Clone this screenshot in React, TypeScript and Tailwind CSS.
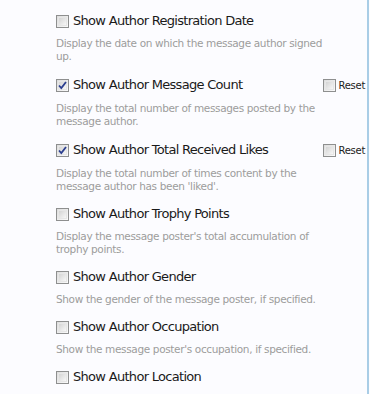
import React from 'react';

type Option = {
  label: string;
  description?: string;
  checked?: boolean;
  reset?: boolean;
};

const options: Option[] = [
  {
    label: 'Show Author Registration Date',
    description: 'Display the date on which the message author signed up.',
  },
  {
    label: 'Show Author Message Count',
    description: 'Display the total number of messages posted by the message author.',
    checked: true,
    reset: true,
  },
  {
    label: 'Show Author Total Received Likes',
    description: "Display the total number of times content by the message author has been 'liked'.",
    checked: true,
    reset: true,
  },
  {
    label: 'Show Author Trophy Points',
    description: "Display the message poster's total accumulation of trophy points.",
  },
  {
    label: 'Show Author Gender',
    description: 'Show the gender of the message poster, if specified.',
  },
  {
    label: 'Show Author Occupation',
    description: "Show the message poster's occupation, if specified.",
  },
  { label: 'Show Author Location' },
];

function Box({ checked }: { checked?: boolean }) {
  return (
    <span className="relative inline-block w-[13px] h-[13px] shrink-0 border border-[#8e8f8f] bg-gradient-to-br from-[#dcdcdc] to-[#fbfbfb]">
      <span className="absolute inset-[1px] border border-[#e6e6e6] bg-gradient-to-br from-[#d4d4d4] to-[#f7f7f7]" />
      {checked && (
        <svg className="absolute inset-0" width="11" height="11" viewBox="0 0 11 11">
          <path d="M2 5.5 L4.3 8 L9 2" fill="none" stroke="#2b3e8f" strokeWidth="1.8" />
        </svg>
      )}
    </span>
  );
}

export default function App() {
  return (
    <div className="w-[370px] h-[394px] overflow-hidden bg-[#fcfcff] flex font-['DejaVu_Sans',sans-serif]">
      <div className="flex-1 pl-[56px] pt-[14px]">
        {options.map((o) => (
          <div key={o.label} className="mb-[14px]">
            <div className="flex items-center">
              <label className="flex items-center gap-[4px] text-[13px] leading-[14px] text-[#1a1a1a] tracking-[-0.7px] flex-1">
                <Box checked={o.checked} />
                <span>{o.label}</span>
              </label>
              {o.reset && (
                <span className="flex items-center gap-[3px] mr-[2px] mt-[1px] text-[10px] text-[#222] tracking-[-0.3px]">
                  <Box />
                  Reset
                </span>
              )}
            </div>
            {o.description && (
              <p className="mt-[9px] w-[268px] text-[10.5px] leading-[13px] text-[#9c9c9c] tracking-[-0.35px]">
                {o.description}
              </p>
            )}
          </div>
        ))}
      </div>
      <div className="w-[2px] h-full bg-[#a9cde6] mr-[1px]" />
    </div>
  );
}
